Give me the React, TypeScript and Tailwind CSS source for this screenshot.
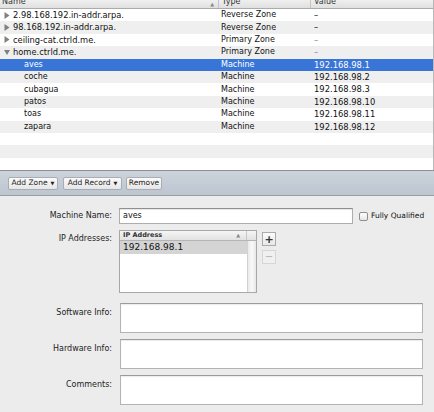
import React from 'react';

type Row = {
  name: string;
  type: string;
  value: string;
  level: 0 | 1;
  arrow?: 'closed' | 'open';
  faint?: boolean;
};

const rows: Row[] = [
  { name: '2.98.168.192.in-addr.arpa.', type: 'Reverse Zone', value: '–', level: 0, arrow: 'closed' },
  { name: '98.168.192.in-addr.arpa.', type: 'Reverse Zone', value: '–', level: 0, arrow: 'closed' },
  { name: 'ceiling-cat.ctrld.me.', type: 'Primary Zone', value: '–', level: 0, arrow: 'closed', faint: true },
  { name: 'home.ctrld.me.', type: 'Primary Zone', value: '–', level: 0, arrow: 'open', faint: true },
  { name: 'aves', type: 'Machine', value: '192.168.98.1', level: 1 },
  { name: 'coche', type: 'Machine', value: '192.168.98.2', level: 1 },
  { name: 'cubagua', type: 'Machine', value: '192.168.98.3', level: 1 },
  { name: 'patos', type: 'Machine', value: '192.168.98.10', level: 1 },
  { name: 'toas', type: 'Machine', value: '192.168.98.11', level: 1 },
  { name: 'zapara', type: 'Machine', value: '192.168.98.12', level: 1 },
];

function Disclosure({ open }: { open: boolean }) {
  return (
    <svg width="6" height="7" viewBox="0 0 6 7" className="shrink-0">
      {open ? <polygon points="0,1 6,1 3,6" fill="#808080" /> : <polygon points="0.5,0 5.5,3.5 0.5,7" fill="#808080" />}
    </svg>
  );
}

function Label({ children, top }: { children: React.ReactNode; top?: string }) {
  return (
    <div className={`w-[112px] shrink-0 text-right text-[8px] text-[#1c1c1c] ${top ?? ''}`}>{children}</div>
  );
}

function InfoRow({ label, first }: { label: string; first?: boolean }) {
  return (
    <div className={`flex items-start ${first ? 'mt-[10px]' : 'mt-[6px]'}`}>
      <Label top="pt-[4px]">{label}</Label>
      <div className="ml-[8px] h-[30px] w-[303px] border border-[#b3b3b3] border-t-[#9b9b9b] bg-white shadow-[inset_0_1px_1px_rgba(0,0,0,0.08)]" />
    </div>
  );
}

export default function App() {
  const empty = [0, 1, 2];
  return (
    <div className="h-[412px] w-[434px] overflow-hidden bg-[#ececec] font-['DejaVu_Sans',sans-serif] text-[#111]">
      {/* records table */}
      <div className="border-r border-[#b9b9b9] bg-white">
        <div className="flex h-[9px] overflow-hidden border-b border-[#ababab] bg-gradient-to-b from-[#efefef] to-[#e0e0e0] text-[8px] text-[#333]">
          <div className="relative flex w-[218px] items-end pl-[2px]">
            <span className="relative top-[-2px] leading-none">Name</span>
            <span className="absolute right-[4px] bottom-[1px] text-[5px] leading-none text-[#888]">▲</span>
          </div>
          <div className="flex w-[92px] items-end border-l border-[#c4c4c4] pl-[3px]">
            <span className="relative top-[-2px] leading-none">Type</span>
          </div>
          <div className="flex flex-1 items-end border-l border-[#c4c4c4] pl-[3px]">
            <span className="relative top-[-2px] leading-none">Value</span>
          </div>
        </div>

        {rows.map((r, i) => {
          const selected = r.name === 'aves';
          const bg = selected ? 'bg-[#3875d7] text-white' : i % 2 === 0 ? 'bg-white' : 'bg-[#efefef]';
          return (
            <div key={r.name} className={`flex h-[12.4px] items-center text-[8px] leading-none ${bg}`}>
              <div className={`flex w-[218px] items-center ${r.level === 0 ? 'pl-[4px]' : 'pl-[24px]'}`}>
                {r.arrow && <Disclosure open={r.arrow === 'open'} />}
                <span className={r.arrow ? 'ml-[3px] text-[8.3px]' : ''}>{r.name}</span>
              </div>
              <div className="w-[92px] pl-[3px]">{r.type}</div>
              <div className={`flex-1 pl-[4px] text-[8.4px] ${r.faint ? 'text-[#888]' : ''}`}>{r.value}</div>
            </div>
          );
        })}
        {empty.map((e) => (
          <div key={e} className={`h-[12.4px] ${(rows.length + e) % 2 === 0 ? 'bg-white' : 'bg-[#efefef]'}`} />
        ))}
      </div>

      {/* toolbar */}
      <div className="flex h-[26px] items-center gap-[5px] border-t border-b border-t-[#8e8e8e] border-b-[#9d9d9d] bg-gradient-to-b from-[#ccd3dc] to-[#bcc5d0] pl-[8px] text-[7.5px] text-[#222]">
        <button className="flex h-[13px] w-[50px] items-center justify-center gap-[3px] rounded-[2px] border border-[#a9adb3] bg-gradient-to-b from-[#fbfbfb] to-[#e6e6e6] leading-none">
          Add Zone <span className="text-[5px]">▼</span>
        </button>
        <button className="flex h-[13px] w-[59px] items-center justify-center gap-[3px] rounded-[2px] border border-[#a9adb3] bg-gradient-to-b from-[#fbfbfb] to-[#e6e6e6] leading-none">
          Add Record <span className="text-[5px]">▼</span>
        </button>
        <button className="ml-[-1px] flex h-[13px] w-[36px] items-center justify-center rounded-[2px] border border-[#a9adb3] bg-gradient-to-b from-[#fbfbfb] to-[#e6e6e6] leading-none">
          Remove
        </button>
      </div>

      {/* detail form */}
      <div className="pt-[12px]">
        <div className="flex h-[16px] items-center">
          <Label>Machine Name:</Label>
          <div className="ml-[7px] flex h-[16px] w-[234px] items-center border border-[#adadad] border-t-[#8f8f8f] bg-white pl-[3px] text-[8px] shadow-[inset_0_1px_1px_rgba(0,0,0,0.1)]">
            aves
          </div>
          <div className="ml-[6px] h-[9px] w-[9px] rounded-[2px] border border-[#8e8e8e] bg-gradient-to-b from-white to-[#e6e6e6]" />
          <span className="ml-[3px] text-[7.5px]">Fully Qualified</span>
        </div>

        <div className="mt-[6px] flex items-start">
          <Label top="pt-[3px]">IP Addresses:</Label>
          <div className="ml-[7px] flex h-[63px] w-[138px] flex-col border border-[#a8a8a8] bg-white">
            <div className="flex h-[10px] border-b border-[#b4b4b4] bg-gradient-to-b from-[#f5f5f5] to-[#e2e2e2]">
              <div className="relative flex w-[127px] items-center border-r border-[#c8c8c8] pl-[3px] text-[6.5px] leading-none font-bold text-[#333]">
                IP Address
                <span className="absolute right-[6px] top-[2px] text-[5px] text-[#888]">▲</span>
              </div>
              <div className="flex-1" />
            </div>
            <div className="flex flex-1">
              <div className="w-[127px]">
                <div className="flex h-[13px] items-center bg-[#d4d4d4] pl-[3px] text-[9px] leading-none">192.168.98.1</div>
              </div>
              <div className="flex-1 border-l border-[#d2d2d2] bg-gradient-to-r from-[#e9e9e9] via-[#f9f9f9] to-[#e6e6e6]" />
            </div>
          </div>
          <div className="ml-[5px] mt-[2px] flex flex-col gap-[4px]">
            <div className="flex h-[14px] w-[14px] items-center justify-center border border-[#ababab] bg-gradient-to-b from-[#fbfbfb] to-[#e8e8e8] text-[11px] leading-none font-bold text-[#333]">
              +
            </div>
            <div className="flex h-[14px] w-[14px] items-center justify-center border border-[#d6d6d6] bg-[#f0f0f0] text-[10px] leading-none text-[#b0b0b0]">
              −
            </div>
          </div>
        </div>

        <InfoRow label="Software Info:" first />
        <InfoRow label="Hardware Info:" />
        <InfoRow label="Comments:" />
      </div>
    </div>
  );
}
